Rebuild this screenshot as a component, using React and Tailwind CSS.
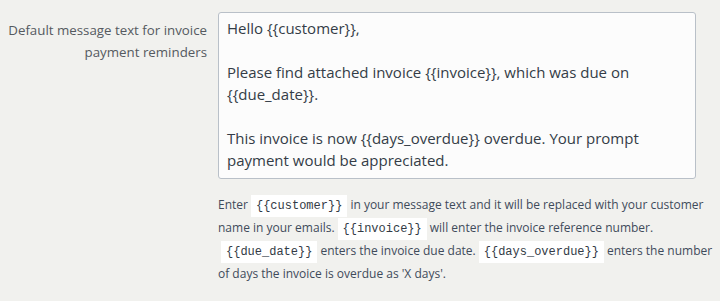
import React from "react";

const Code = ({ children }) => (
  <code className="bg-white px-[5px] py-[4px] mx-[3px] font-['Liberation_Mono',monospace] text-[12px] leading-none text-[#333b46]">
    {children}
  </code>
);

const App = () => {
  const message =
    "Hello {{customer}},\n\nPlease find attached invoice {{invoice}}, which was due on {{due_date}}.\n\nThis invoice is now {{days_overdue}} overdue. Your prompt payment would be appreciated.";

  return (
    <div className="w-[720px] h-[301px] bg-[#f1f1ee] font-['Open_Sans',sans-serif] overflow-hidden">
      <div className="flex pt-[12px]">
        <label className="w-[208px] pr-[1px] pt-[7px] text-right text-[13.3px] leading-[22px] text-[#555a60]">
          Default message text for invoice payment reminders
        </label>
        <div className="ml-[10px] w-[478px]">
          <textarea
            defaultValue={message}
            className="block w-[478px] h-[167px] resize-none rounded-[3px] border border-[#b9c0c8] bg-[#fcfcfc] px-[8px] py-[4px] text-[15px] leading-[22px] text-[#343c47] outline-none"
          />
          <p className="mt-[14px] w-[500px] text-[12px] leading-[23px] text-[#3f4b5b]">
            Enter<Code>{"{{customer}}"}</Code>in your message text and it will be replaced with your customer
            <br />
            name in your emails.<Code>{"{{invoice}}"}</Code>will enter the invoice reference number.
            <br />
            <Code>{"{{due_date}}"}</Code>enters the invoice due date.<Code>{"{{days_overdue}}"}</Code>enters the number
            <br />
            of days the invoice is overdue as 'X days'.
          </p>
        </div>
      </div>
    </div>
  );
};

export default App;
